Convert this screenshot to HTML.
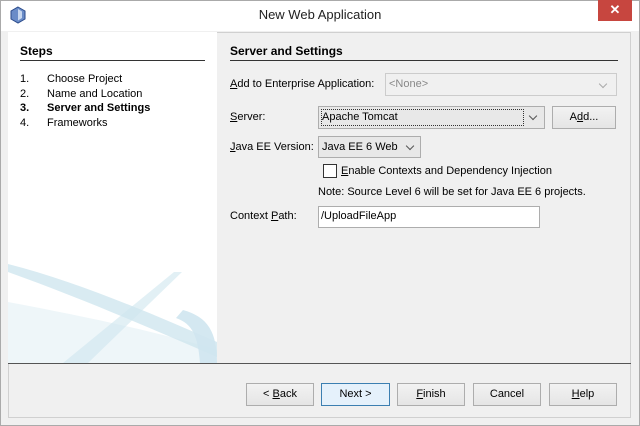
<!DOCTYPE html>
<html><head><style>
body{margin:0;width:640px;height:426px;overflow:hidden;background:#fff;font-family:"Liberation Sans",sans-serif;font-size:11px;color:#000;position:relative}
.a{position:absolute}
.t{position:absolute;white-space:nowrap;line-height:14px}
.box{position:absolute;background:#fff;border:1px solid #adadad;box-sizing:border-box}
.btn{position:absolute;background:linear-gradient(#f2f2f2,#e5e5e5);border:1px solid #adadad;box-sizing:border-box;text-align:center;line-height:20px}
u{text-decoration:underline}
.chev{position:absolute;width:5px;height:5px;border-right:1.3px solid #555;border-bottom:1.3px solid #555;transform:rotate(45deg)}
</style></head><body>
<div class="a" style="left:0;top:0;width:640px;height:426px;background:#f0f0f0;border:1px solid #aaa;box-sizing:border-box"></div>
<div class="a" style="left:1px;top:1px;width:638px;height:30px;background:#fff"></div>
<svg class="a" style="left:10px;top:6px" width="16" height="18"><path d="M8 1 L15 5 L15 13 L8 17 L1 13 L1 5Z" fill="#6a8cc8" stroke="#2a4a8a"/><path d="M8 3 L12 5.5 L12 12 L8 14.5Z" fill="#c8d8f0"/></svg>
<div class="t" style="left:0;width:640px;text-align:center;top:8px;font-size:13px;color:#222">New Web Application</div>
<div class="a" style="left:598px;top:0;width:34px;height:21px;background:#c7463f;color:#fff;text-align:center;line-height:20px;font-size:13px;font-weight:bold">✕</div>
<div class="a" style="left:8px;top:32px;width:623px;height:386px;background:#f0f0f0;border:1px solid #d0d0d0;box-sizing:border-box"></div>
<div class="a" style="left:8px;top:32px;width:209px;height:331px;background:#fff;overflow:hidden">
<svg width="209" height="331"><g fill="#cfe6ef">
<path d="M0 240 C70 265 140 295 209 325 L209 310 C140 280 70 250 0 232Z" opacity=".8"/>
<path d="M0 270 C80 285 150 300 209 318 L209 331 L0 331Z" opacity=".35"/>
<path d="M166 240 L55 331 L80 331 L174 240Z" opacity=".6"/>
<path d="M175 278 C200 285 209 300 209 331 L192 331 C190 305 185 292 168 286Z" opacity=".9"/>
</g></svg></div>
<div class="t" style="left:20px;top:44px;font-weight:bold;font-size:12px">Steps</div>
<div class="a" style="left:20px;top:60px;width:185px;height:1px;background:#333"></div>
<div class="t" style="left:20px;top:72px">1.</div><div class="t" style="left:47px;top:72px">Choose Project</div>
<div class="t" style="left:20px;top:87px">2.</div><div class="t" style="left:47px;top:87px">Name and Location</div>
<div class="t" style="left:20px;top:101px;font-weight:bold">3.</div><div class="t" style="left:47px;top:101px;font-weight:bold">Server and Settings</div>
<div class="t" style="left:20px;top:116px">4.</div><div class="t" style="left:47px;top:116px">Frameworks</div>
<div class="t" style="left:230px;top:44px;font-weight:bold;font-size:12px">Server and Settings</div>
<div class="a" style="left:230px;top:60px;width:388px;height:1px;background:#333"></div>
<div class="t" style="left:230px;top:77px"><u>A</u>dd to Enterprise Application:</div>
<div class="box" style="left:385px;top:73px;width:232px;height:23px;background:#f0f0f0;border-color:#ccc"></div>
<div class="t" style="left:389px;top:77px;color:#888">&lt;None&gt;</div>
<div class="chev" style="left:600px;top:81px;border-color:#aaa"></div>
<div class="t" style="left:230px;top:110px"><u>S</u>erver:</div>
<div class="box" style="left:318px;top:106px;width:227px;height:23px;background:#e8e8e8"></div>
<div class="a" style="left:321px;top:109px;width:201px;height:15px;border:1px dotted #333"></div>
<div class="t" style="left:322px;top:110px">Apache Tomcat</div>
<div class="chev" style="left:530px;top:113px"></div>
<div class="btn" style="left:552px;top:106px;width:64px;height:23px">A<u>d</u>d...</div>
<div class="t" style="left:230px;top:140px"><u>J</u>ava EE Version:</div>
<div class="box" style="left:318px;top:136px;width:103px;height:22px;background:#e8e8e8"></div>
<div class="t" style="left:322px;top:140px">Java EE 6 Web</div>
<div class="chev" style="left:407px;top:143px"></div>
<div class="box" style="left:323px;top:164px;width:14px;height:14px;border-color:#333"></div>
<div class="t" style="left:341px;top:164px"><u>E</u>nable Contexts and Dependency Injection</div>
<div class="t" style="left:318px;top:185px">Note: Source Level 6 will be set for Java EE 6 projects.</div>
<div class="t" style="left:230px;top:209px">Context <u>P</u>ath:</div>
<div class="box" style="left:318px;top:206px;width:222px;height:22px"></div>
<div class="t" style="left:321px;top:209px">/UploadFileApp</div>
<div class="a" style="left:8px;top:363px;width:623px;height:1px;background:#555"></div>
<div class="btn" style="left:246px;top:383px;width:68px;height:23px">&lt; <u>B</u>ack</div>
<div class="btn" style="left:321px;top:383px;width:69px;height:23px;background:#e5f1fb;border-color:#3c7fb1">Next &gt;</div>
<div class="btn" style="left:397px;top:383px;width:68px;height:23px"><u>F</u>inish</div>
<div class="btn" style="left:473px;top:383px;width:68px;height:23px">Cancel</div>
<div class="btn" style="left:549px;top:383px;width:68px;height:23px"><u>H</u>elp</div>
</body></html>
